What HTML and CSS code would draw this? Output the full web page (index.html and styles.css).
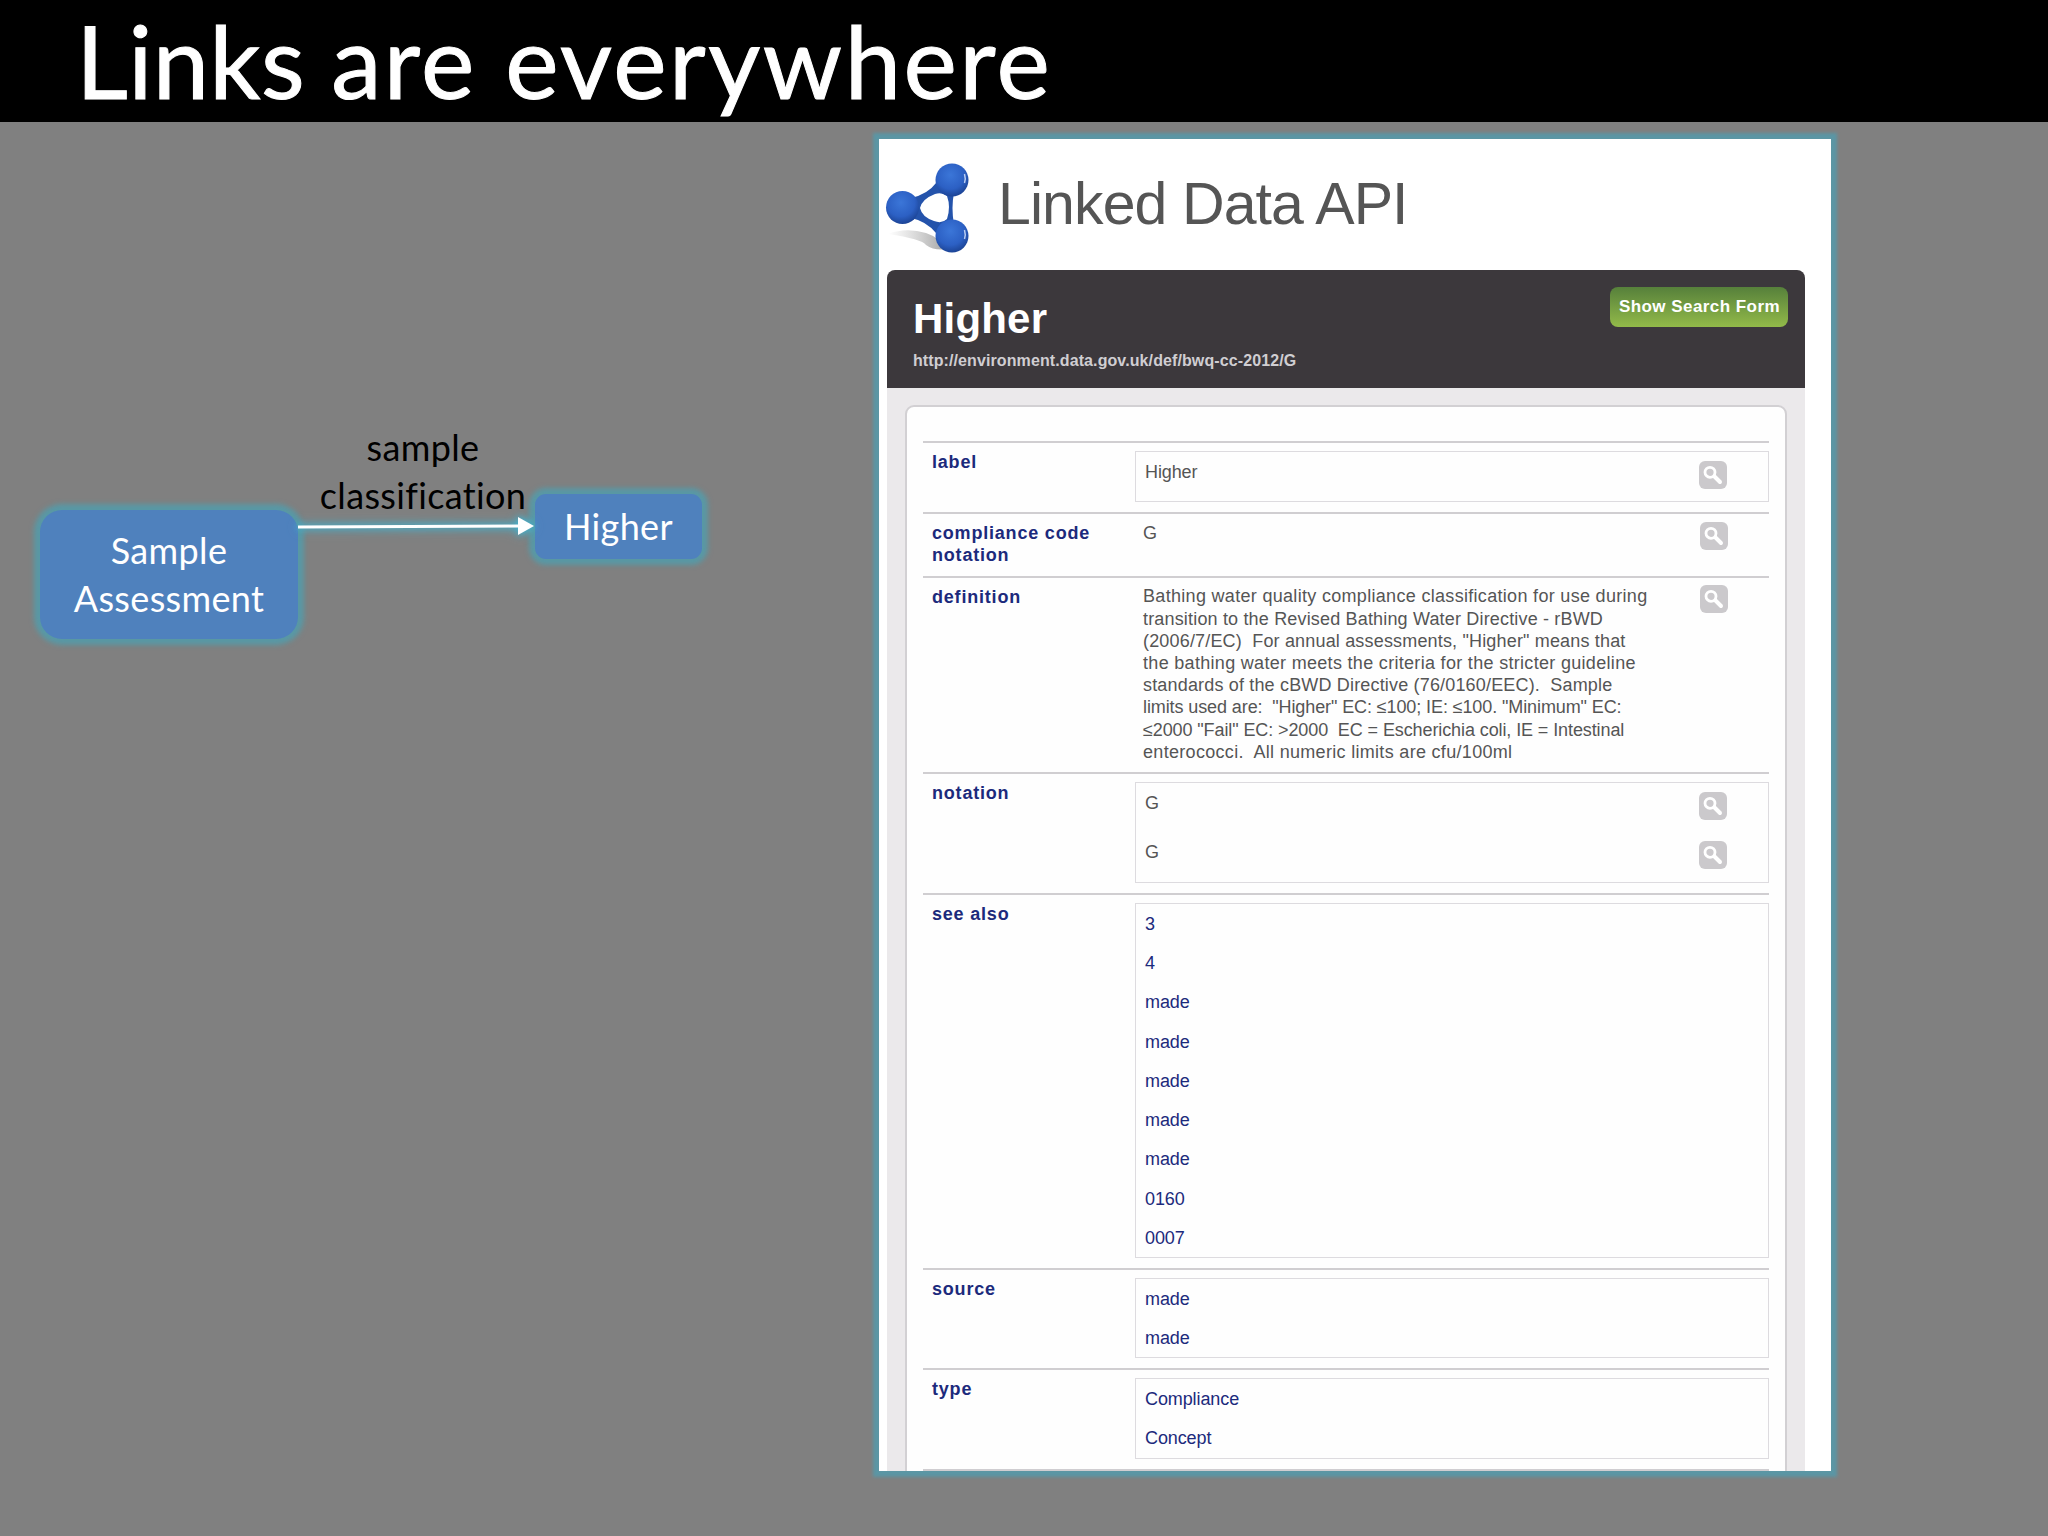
FILE: index.html
```html
<!DOCTYPE html>
<html lang="en">
<head>
    <meta charset="UTF-8">
    <meta name="viewport" content="width=device-width, initial-scale=1.0">
    <title>Links are everywhere</title>

    <link rel="stylesheet" href="styles.css">
</head>
<body>
    <svg class="defs" width="0" height="0">
        <symbol id="search" viewBox="0 0 28 28">
            <rect width="28" height="28" rx="6" fill="#cbc9cc"/>
            <path d="M15.5 15.5 L21 21" stroke="#fff" stroke-width="4" stroke-linecap="round"/>
            <circle cx="11" cy="11.3" r="5" fill="#cbc9cc" stroke="#fff" stroke-width="2.8"/>
        </symbol>
    </svg>

    <header class="title">
        <h1>Links <span class="wide">are everywhere</span></h1>
    </header>

    <main>
        <section class="diagram">
            <div class="node assessment">Sample<br>Assessment</div>
            <svg class="arrow" width="260" height="60" viewBox="0 0 260 60">
                <path d="M10 31 L232 30" stroke="#fff" stroke-width="3"/>
                <path d="M230 21 L246 30 L230 39 Z" fill="#fff"/>
            </svg>
            <div class="edge-label">sample<br>classification</div>
            <div class="node higher">Higher</div>
        </section>

        <section class="panel">
            <div class="brand">
                <svg class="logo" width="88" height="92" viewBox="0 0 88 92">
                    <defs>
                        <radialGradient id="ball" cx="0.45" cy="0.35" r="0.65">
                            <stop offset="0" stop-color="#3b76d8"/>
                            <stop offset="0.65" stop-color="#2c60c4"/>
                            <stop offset="1" stop-color="#1c4496"/>
                        </radialGradient>
                        <linearGradient id="shade" x1="0" x2="1">
                            <stop offset="0" stop-color="#999" stop-opacity="0"/>
                            <stop offset="1" stop-color="#777" stop-opacity="0.7"/>
                        </linearGradient>
                    </defs>
                    <path d="M4 71 Q22 64 42 70 Q54 74 64 86 Q50 88 42 82 Q38 76 4 71 Z" fill="url(#shade)"/>
                    <path d="M27 35 Q44 31 52 20 L70 30 Q67 44 70 62 L52 70 Q42 58 27 55 Z
                             M36 45 Q38 54 50 58 Q58 61 63 56 Q67 44 63 33 Q58 29 51 31 Q38 36 36 45 Z"
                          fill="#2453ab" fill-rule="evenodd"/>
                    <circle cx="68" cy="17" r="16.5" fill="url(#ball)"/>
                    <circle cx="18.5" cy="44.5" r="16.5" fill="url(#ball)"/>
                    <circle cx="68" cy="73" r="16.5" fill="url(#ball)"/>
                    <path d="M80.5 11 Q82 16 80.5 20 M80.5 67 Q82 72 80.5 76" stroke="#b9cdf2" stroke-width="1.5" fill="none"/>
                </svg>
                <h2>Linked Data API</h2>
            </div>

            <div class="item-header">
                <div>
                    <h3>Higher</h3>
                    <p class="uri">http://environment.data.gov.uk/def/bwq-cc-2012/G</p>
                </div>
                <button class="search-btn">Show Search Form</button>
            </div>

            <div class="item-body">
                <div class="sheet">
                    <div class="row">
                        <div class="name">label</div>
                        <div class="box tall">
                            <div class="value">Higher <svg class="icon"><use href="#search"/></svg></div>
                        </div>
                    </div>
                    <div class="row">
                        <div class="name">compliance code<br>notation</div>
                        <div class="plain">G <svg class="icon"><use href="#search"/></svg></div>
                    </div>
                    <div class="row">
                        <div class="name">definition</div>
                        <div class="plain definition">
                            <p>Bathing water quality compliance classification for use during<br>
                            <span class="snug">transition to the Revised Bathing Water Directive - rBWD<br>
                            (2006/7/EC)&nbsp; For annual assessments, "Higher" means that</span><br>
                            the bathing water meets the criteria for the stricter guideline<br>
                            <span class="snug">standards of the cBWD Directive (76/0160/EEC).&nbsp; Sample</span><br>
                            <span class="tight">limits used are:&nbsp; "Higher" EC: ≤100; IE: ≤100. "Minimum" EC:<br>
                            ≤2000 "Fail" EC: &gt;2000&nbsp; EC = Escherichia coli, IE = Intestinal</span><br>
                            enterococci.&nbsp; All numeric limits are cfu/100ml</p>
                            <svg class="icon"><use href="#search"/></svg>
                        </div>
                    </div>
                    <div class="row">
                        <div class="name">notation</div>
                        <div class="box tall">
                            <div class="value">G <svg class="icon"><use href="#search"/></svg></div>
                            <div class="value">G <svg class="icon"><use href="#search"/></svg></div>
                        </div>
                    </div>
                    <div class="row">
                        <div class="name">see also</div>
                        <div class="box links">
                            <div class="value">3</div>
                            <div class="value">4</div>
                            <div class="value">made</div>
                            <div class="value">made</div>
                            <div class="value">made</div>
                            <div class="value">made</div>
                            <div class="value">made</div>
                            <div class="value">0160</div>
                            <div class="value">0007</div>
                        </div>
                    </div>
                    <div class="row">
                        <div class="name">source</div>
                        <div class="box links">
                            <div class="value">made</div>
                            <div class="value">made</div>
                        </div>
                    </div>
                    <div class="row">
                        <div class="name">type</div>
                        <div class="box links">
                            <div class="value">Compliance</div>
                            <div class="value">Concept</div>
                        </div>
                    </div>
                    <div class="row"></div>
                </div>
            </div>
        </section>
    </main>
</body>
</html>
```
FILE: styles.css
```css
* {
    box-sizing: border-box;
}

body {
    margin: 0;
    width: 2048px;
    height: 1536px;
    overflow: hidden;
    background-color: #808080;
    font-family: "Liberation Sans", Arial, sans-serif;
}

h1, h2, h3, p {
    margin: 0;
}

.defs {
    display: block;
}

.title {
    height: 122px;
    padding-left: 76px;
    background-color: black;
    color: white;
}

.title h1 {
    font-family: Lato, sans-serif;
    font-size: 101px;
    font-weight: normal;
    line-height: 121px;
    letter-spacing: 0.3px;
    -webkit-text-stroke: 1px white;
}

.title .wide {
    letter-spacing: 2.5px;
}

main {
    display: flex;
}

/* left side: nodes placed freely on the slide */
.diagram {
    position: relative;
    width: 879px;
    font-family: Lato, sans-serif;
    font-size: 36px;
    line-height: 48px;
    letter-spacing: 0.35px;
    text-align: center;
}

.node {
    position: absolute;
    display: flex;
    align-items: center;
    justify-content: center;
    padding-bottom: 2px;
    background-color: #4f81bd;
    color: white;
    box-shadow: 0 0 5px 6px rgba(75,160,178,0.75);
}

.assessment {
    left: 40px;
    top: 388px;
    width: 258px;
    height: 129px;
    border-radius: 22px;
}

.higher {
    left: 535px;
    top: 372px;
    width: 167px;
    height: 65px;
    border-radius: 11px;
}

.edge-label {
    position: absolute;
    left: 303px;
    top: 301px;
    width: 240px;
    color: black;
}

/* sits above the node glow so the head stays white */
.arrow {
    position: absolute;
    z-index: 1;
    left: 288px;
    top: 374px;
    filter: drop-shadow(0 0 3px #3fb4d2) drop-shadow(0 0 5px rgba(63,180,210,0.8));
}

.edge-label {
    z-index: 2;
}

/* right side: the linked data page */
.panel {
    width: 952px;
    height: 1332px;
    margin-top: 17px;
    padding: 0 26px 0 8px;
    overflow: hidden;
    background-color: white;
    box-shadow: 0 0 3px 6px #5b96a4;
}

.brand {
    display: flex;
    height: 131px;
    padding-top: 24px;
}

.brand h2 {
    margin-left: 26px;
    color: #555;
    font-size: 59px;
    font-weight: normal;
    line-height: 83px;
    letter-spacing: -0.9px;
    white-space: nowrap;
}

.logo {
    flex: none;
    margin-left: -3px;
}

.item-header {
    display: flex;
    justify-content: space-between;
    align-items: flex-start;
    height: 118px;
    padding: 17px 17px 0 26px;
    border-radius: 8px 8px 0 0;
    background-color: #3c383c;
    color: white;
}

.item-header h3 {
    padding-top: 8px;
    font-size: 42px;
    line-height: 48px;
    letter-spacing: 0.2px;
}

.uri {
    padding-top: 8px;
    color: #d0ced2;
    font-size: 16px;
    font-weight: bold;
    line-height: 20px;
    letter-spacing: 0.1px;
}

.search-btn {
    width: 178px;
    height: 40px;
    padding: 0 0 0 1px;
    border: 0;
    border-radius: 8px;
    background: linear-gradient(#56803b, #92ba49);
    color: white;
    font-family: inherit;
    font-size: 17px;
    font-weight: bold;
    letter-spacing: 0.45px;
    white-space: nowrap;
}

.item-body {
    height: 1100px;
    padding: 17px 18px 0;
    background-color: #ebe9eb;
}

.sheet {
    height: 1200px;
    padding: 34px 16px 0;
    border: 2px solid #d2d0d3;
    border-radius: 9px;
    background-color: #fefefe;
}

.row {
    display: grid;
    grid-template-columns: 212px 1fr;
    padding: 8px 0 9.8px;
    border-top: 2px solid #d0ced1;
    font-size: 18px;
    line-height: 22.2px;
}

.name {
    padding-left: 9px;
    color: #1c2a7c;
    font-weight: bold;
    letter-spacing: 0.8px;
}

.plain {
    display: flex;
    justify-content: space-between;
    margin-bottom: -1.5px;
    padding: 0 41px 0 8px;
    color: #555;
    letter-spacing: 0.31px;
}

.definition {
    position: relative;
    top: -1px;
}

.snug {
    letter-spacing: 0.17px;
}

.tight {
    letter-spacing: -0.1px;
}

.box {
    border: 1px solid #dddbdf;
    color: #555;
}

.value {
    display: flex;
    justify-content: space-between;
    height: 39.25px;
    padding: 9px 41px 0 9px;
    letter-spacing: -0.1px;
}

.tall .value {
    height: 49.4px;
    padding-top: 8.6px;
}

.links {
    color: #1c2a7c;
}

.icon {
    flex: none;
    width: 28px;
    height: 28px;
}
```
